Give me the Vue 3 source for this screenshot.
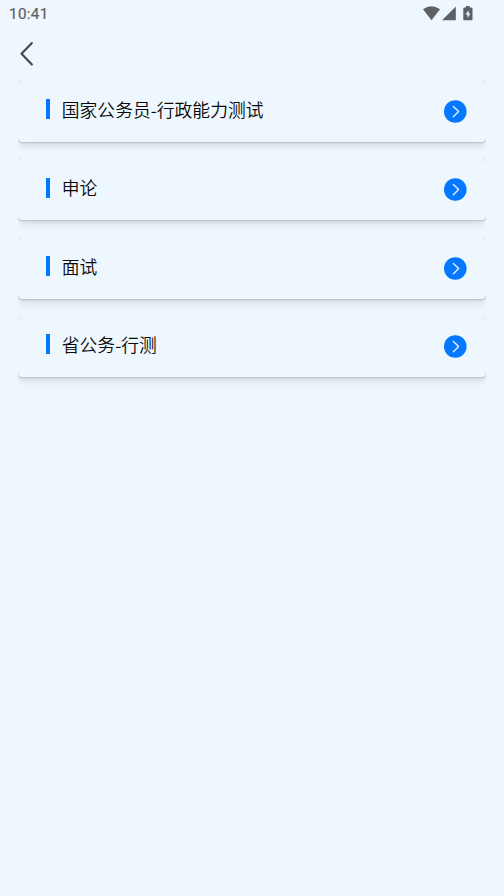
<script setup>
const sections = ['国家公务员-行政能力测试', '申论', '面试', '省公务-行测']
</script>

<template>
  <main class="screen">
    <header class="status">
      <span class="time">10:41</span>
      <svg class="indicators" width="52" height="16" viewBox="0 0 52 16" fill="#5d6164">
        <path d="M0 3.2Q8.5-2.8 17 3.2L8.5 14.2Z" />
        <path d="M32.8 .6V14.3H19Z" />
        <path d="M43 0h3.600v1.400h2q.9 0 .9.900v11q0 .9-.9.900h-7.400q-.9 0-.9-.9v-11q0-.9.900-.9H43Z" />
        <path d="M45.600 4.200l-3.200 4.300h2V12l3.200-4.600h-2Z" fill="#eef6fd" />
      </svg>
    </header>
    <nav class="nav">
      <button class="back" aria-label="返回">
        <svg width="16" height="26" viewBox="0 0 16 26" fill="none" stroke="#44484b" stroke-width="2.100">
          <path d="M12.900 2 2.500 12.800 12.900 23.600" stroke-linecap="round" stroke-linejoin="round" />
        </svg>
      </button>
    </nav>
    <ul class="list">
      <li v-for="name in sections" :key="name" class="slot">
        <div class="card">
          <span class="bar"></span>
          <span class="name">{{ name }}</span>
          <svg class="go" width="23" height="23" viewBox="0 0 23 23" fill="none">
            <circle cx="11.300" cy="11.500" r="11.300" fill="#0478ff" />
            <path d="M9.400 6.400 14.600 11.600 9.400 16.800" stroke="#e4f2ff" stroke-width="1.400" stroke-linecap="round" stroke-linejoin="round" />
          </svg>
        </div>
      </li>
    </ul>
  </main>
</template>

<style>
body {
  background: #eef6fe;
}
</style>

<style scoped>
.screen {
  box-sizing: border-box;
  min-height: 100vh;
  background: #eef6fe;
  font-family: Roboto, "Noto Sans CJK SC", sans-serif;
}
.status {
  display: flex;
  justify-content: space-between;
  align-items: flex-start;
  height: 28px;
  padding: 6px 29px 0 9px;
  box-sizing: border-box;
}
.time {
  color: #5d6164;
  font-size: 15.200px;
  font-weight: 400;
  line-height: 16px;
  letter-spacing: 0.350px;
  -webkit-text-stroke: 0.200px #5d6164;
}
.nav {
  height: 52.700px;
  padding: 13px 0 0 19px;
  box-sizing: border-box;
}
.back {
  display: block;
  padding: 0;
  border: 0;
  background: none;
}
.back svg,
.go {
  display: block;
}
.list {
  margin: 0;
  padding: 0 18px;
  list-style: none;
}
.slot {
  height: 78.400px;
  overflow: hidden;
}
.card {
  display: flex;
  align-items: center;
  height: 61.300px;
  padding: 0 19px 0 28px;
  box-sizing: border-box;
  border-radius: 4.500px;
  background: #eef7fe;
  box-shadow: 0 0.500px 2px rgba(0, 0, 0, 0.16), 0 3px 10px rgba(0, 0, 0, 0.13);
}
.bar {
  width: 4.200px;
  height: 20px;
  margin: 0 11.600px 4.200px 0;
  background: #0478ff;
}
.name {
  flex: 1;
  margin-bottom: 5px;
  color: #080808;
  font-family: "Noto Sans CJK SC", sans-serif;
  font-size: 17.800px;
  font-weight: 350;
  line-height: 26px;
}
</style>
